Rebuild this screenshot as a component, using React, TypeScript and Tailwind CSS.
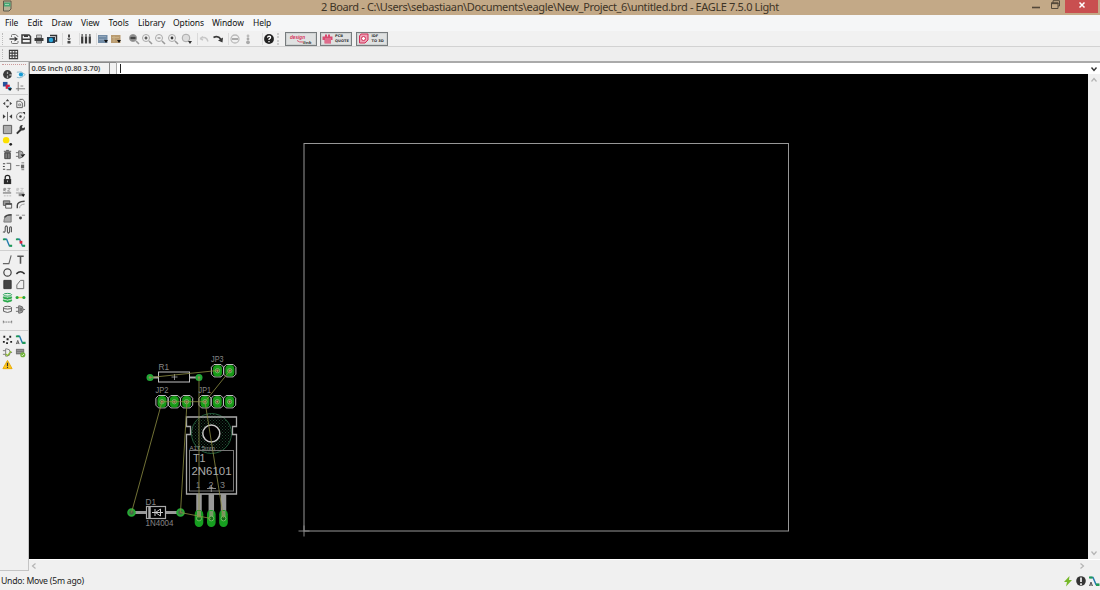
import type { ReactNode } from 'react';

const ui = 'font-["Noto_Sans","Open_Sans",sans-serif]';

const menus = [
  { label: 'File', width: 'w-[22.5px]' },
  { label: 'Edit', width: 'w-[24px]' },
  { label: 'Draw', width: 'w-[29.5px]' },
  { label: 'View', width: 'w-[27.5px]' },
  { label: 'Tools', width: 'w-[29.5px]' },
  { label: 'Library', width: 'w-[35px]' },
  { label: 'Options', width: 'w-[39px]' },
  { label: 'Window', width: 'w-[41px]' },
  { label: 'Help', width: 'w-[30px]' },
];

const K = '#3a3a3a';
const G = '#1f9a55';

// every glyph is drawn on a 12 x 12 grid
const icons: Record<string, ReactNode> = {
  open: <><path d="M3.500 4V2.500q0-1 1-1h3l2.500 2V4M3.500 8v1.500q0 1 1 1H9q1 0 1-1V8" stroke="#777" /><path d="M1.500 6h5" stroke={K} strokeWidth="1.300" /><path d="M6.500 3.500L10 6 6.500 8.500z" fill={K} stroke="none" /></>,
  save: <><path d="M2 2h7l1.500 1.500V10H2z" stroke={K} strokeWidth="1.500" /><path d="M2 5.500h8.500V7H2zM4 2h4v2H4z" fill={K} stroke="none" /></>,
  print: <><path d="M3.500 2h5v3h-5zM3.500 8h5v2h-5z" fill="#ccc" stroke="#777" /><path d="M1.500 5h9v3h-9z" fill={K} stroke="none" /></>,
  cam: <><path d="M4 2.500h6.500v5.500H9" stroke="#333" strokeWidth="1.400" /><path d="M1 4h8v6H1z" fill="#26384a" stroke="none" /><circle cx="5" cy="7" r="2.200" fill="#2aa7dc" stroke="none" /></>,
  board: <path d="M5 1.500h2v3H5zM4 5.500h4L6 7.500zM4.500 8h3v2.500h-3z" fill="#444" stroke="none" />,
  library: <><path d="M2.200 3.500v7M6 3.500v7M9.800 3.500v7" stroke={K} strokeWidth="2.200" /><path d="M2.200 1v3M6 1v3M9.800 1v3" stroke="#777" strokeWidth="1.700" /></>,
  script: <><path d="M1 2h9.500v8H1z" fill="#718ba5" stroke="none" /><path d="M2 3.500h7M2 6.500h5" stroke="#8fa5ba" /><path d="M7 7h4l-2 3z" fill="#111" stroke="none" /></>,
  ulp: <><path d="M1 2h9.500v8H1z" fill="#b99b70" stroke="none" /><path d="M2 4.500h7M4 3v6" stroke="#c9b186" /><path d="M7 7h4l-2 3z" fill="#111" stroke="none" /></>,
  zoomFit: <><circle cx="5" cy="5" r="3.500" fill="#888" stroke="#999" /><path d="M2.500 5h5" stroke="#444" strokeWidth="2" /><path d="M8 8l3 3" stroke="#999" strokeWidth="1.600" /></>,
  zoomIn: <><circle cx="5" cy="5" r="3.500" stroke="#aaa" /><path d="M3.500 5h3M5 3.500v3" stroke={K} strokeWidth="1.200" /><path d="M8 8l3 3" stroke="#999" strokeWidth="1.600" /></>,
  zoomOut: <><circle cx="5" cy="5" r="3.500" stroke="#aaa" /><path d="M3.500 5h3" stroke="#777" /><path d="M8 8l3 3" stroke="#999" strokeWidth="1.600" /></>,
  zoomRedraw: <><circle cx="5" cy="5" r="3.500" stroke="#aaa" /><circle cx="5" cy="5" r="1.400" fill={K} stroke="none" /><path d="M8 8l3 3" stroke="#999" strokeWidth="1.600" /></>,
  zoomSelect: <><circle cx="5" cy="5" r="3.800" fill="#ddd" stroke="#aaa" /><path d="M7 8h4l-2 3z" fill="#333" stroke="none" /></>,
  undo: <path d="M2.500 5.500q6-3 7.500 3M2 5.500l3-2M2 5.500l3 1.500" stroke="#c8c8c8" strokeWidth="1.400" />,
  redo: <><path d="M1.500 4.500q4.500-2.500 7.500 2" stroke={K} strokeWidth="1.800" /><path d="M11 4.500l-.5 5-4.500-2z" fill={K} stroke="none" /></>,
  stop: <><circle cx="6" cy="6" r="4" stroke="#bbb" strokeWidth="1.300" /><path d="M3 6h6" stroke="#aaa" strokeWidth="2" /></>,
  go: <><circle cx="6" cy="3" r="1.400" fill="#bbb" stroke="none" /><circle cx="6" cy="6" r="1.400" fill="#aaa" stroke="none" /><circle cx="6" cy="9.300" r="1.900" fill="#aaa" stroke="none" /></>,
  help: <><circle cx="6" cy="6" r="4.900" fill="#222" stroke="none" /><path d="M4.500 4.700q.2-1.500 1.600-1.500 2 .2 1.300 1.800L6 6.300v.7M6 8v1.200" stroke="#fff" strokeWidth="1.300" /></>,
  grid: <path d="M1.500 1.500h9v9h-9zM4.500 1.500v9M7.500 1.500v9M1.500 4.500h9M1.500 7.500h9" stroke={K} strokeWidth="1.100" />,
  info: <><circle cx="6" cy="6" r="4.800" fill="#3a3a3a" stroke="none" /><path d="M6 3v2.500M6 7v3" stroke="#aaa" strokeWidth="1.400" /><path d="M8 6.500h3" stroke="#eee" /></>,
  show: <><path d="M2 3.500q5-2 9 2.500-4 5-9 3" fill="#e8f6fb" stroke="#8bb3c4" /><circle cx="6.500" cy="6" r="2.300" fill="#169bd5" stroke="none" /></>,
  display: <><path d="M1 1h5v5H1z" fill="#27539c" stroke="none" /><path d="M4 4h4.500v4.500H4z" fill="#d22345" stroke="none" /><path d="M6.500 6.500H10V10H6.500z" fill="#45a5d8" stroke="none" /><path d="M6.500 8h4.500l-2.200 3z" fill="#111" stroke="none" /></>,
  mark: <path d="M3.500 1v10M1 8.500h10M6 5.500h3" stroke="#777" />,
  move: <path d="M6 1l2 2.500H4zM6 11l2-2.500H4zM1 6l2.500-2v4zM11 6L8.500 4v4z" fill="#444" stroke="none" />,
  copy: <><path d="M5 1.500h3.500l2 2V9h-1M2 3.500h4l2 2V10.500H2z" stroke="#555" /><path d="M4 6.500h2v2H4z" stroke="#888" /></>,
  mirror: <><path d="M6 1v10" stroke="#666" /><path d="M1 3.500L4 6 1 8.500zM11 3.500L8 6l3 2.500z" fill={K} stroke="none" /></>,
  rotate: <><path d="M8 2.300A4.300 4.300 0 1 0 10.300 6" stroke="#666" /><circle cx="6" cy="6" r="1.300" fill={K} stroke="none" /><path d="M8 1h3v3z" fill={K} stroke="none" /></>,
  group: <path d="M1.500 1.500h9v9h-9z" fill="#adadad" stroke="#555" />,
  change: <><path d="M2 10.500L7 5.500" stroke="#333" strokeWidth="2.200" /><path d="M10.800 3.500L8.500 4.500 7.500 3.500 8.500 1.200A3 3 0 1 0 10.800 3.500" fill={K} stroke="none" /></>,
  paste: <><circle cx="4.500" cy="4.500" r="3.500" fill="#fce000" stroke="none" /><circle cx="9.500" cy="9" r="1.500" fill="#222" stroke="none" /></>,
  trash: <><path d="M3 4h6v6.500H3z" fill="#555" stroke="#444" /><path d="M2 2.500h8M4.500 1.500h3" stroke="#444" /><path d="M4.500 5v5M7.500 5v5" stroke="#999" /></>,
  add: <><path d="M1 4h3M1 8h3M4 2h1q4 0 4 4t-4 4H4zM9 6h2" fill="#aaa" stroke="#666" /><path d="M6 6h5L8.500 9z" fill="#222" stroke="none" /></>,
  pinswap: <><path d="M5 2.500h4.500v7H5" stroke="#555" /><path d="M1 3h2.500M1 9h2.500M1 6h2" stroke="#444" strokeWidth="1.300" /></>,
  replace: <><path d="M1 5h4M7 2h3M7 9.500h3" stroke="#777" /><path d="M6.500 4H10v4H6.500z" fill="#666" stroke="none" /></>,
  lock: <><path d="M3.500 6V3.800q0-2.300 2.500-2.300t2.500 2.300V6" stroke="#222" strokeWidth="1.400" /><path d="M2 5.500h8V11H2z" fill="#2a2a2a" stroke="none" /><path d="M6 7v2" stroke="#bbb" /></>,
  name: <><path d="M2 4.500V1.500h2V3H2l2 1.500M6 1.500h3L6 4.500h3" stroke="#777" strokeWidth=".8" /><path d="M1 6.500h9" stroke="#555" /><path d="M2 9.500h8" stroke="#ccc" strokeDasharray="2 1" strokeWidth="1.500" /></>,
  value: <><path d="M2 4.500V1.500h2V3H2l2 1.500M6 1.500h3L6 4.500h3" stroke="#bbb" strokeWidth=".8" /><path d="M1 6.500h9" stroke="#999" /><path d="M4 7h6v3H4z" fill="#888" stroke="none" /><path d="M7 8h4l-2 3z" fill="#111" stroke="none" /></>,
  smash: <><path d="M1.500 2h7v5h-7z" fill="#999" stroke="#555" /><path d="M4 5h6.500v5H4z" fill="#eee" stroke="#555" /><path d="M4 5.500h6.500" stroke="#444" strokeWidth="1.700" /></>,
  miter: <><path d="M2.500 10V7q0-4 8-4.500" stroke="#444" strokeWidth="1.500" /><path d="M5 10q0-4 5.500-4.500" stroke="#999" /></>,
  split: <><path d="M2 11q0-8 8-8v8z" fill="#aaa" stroke="#777" /><path d="M2.500 6q2-3 8-3" stroke="#444" strokeWidth="1.400" /></>,
  optimize: <><path d="M1 3.500h3.500M7.500 3.500H11" stroke="#888" /><circle cx="6" cy="6.500" r="1.600" fill="#444" stroke="none" /></>,
  meander: <path d="M1 8.500q2.500 1.500 2.500-2V3.500q1.200-3 2.400 0V8.500q1.200 3 2.400 0V4q1.200-2 2 0v5" stroke="#555" strokeWidth="1.200" />,
  route: <><path d="M2 2.500h3l3 7h3" stroke="#247bad" strokeWidth="1.500" /><path d="M1 1.500h3v2H1zM8 8.500h3v2H8z" fill={G} stroke="none" /></>,
  ripup: <><path d="M2 2.500h3l3 7h3" stroke="#247bad" strokeWidth="1.500" /><path d="M1 1.500h3v2H1zM8 8.500h3v2H8z" fill={G} stroke="none" /><path d="M5 4.200h3v3H5z" fill="#df2038" stroke="none" /></>,
  wire: <path d="M1 10.500h6.500L10 1.500" stroke="#666" strokeWidth="1.200" />,
  text: <path d="M2.500 2.500h7M6 2.500V10.500" stroke="#555" strokeWidth="1.700" />,
  circle: <circle cx="6" cy="6" r="4" stroke="#444" strokeWidth="1.300" />,
  arc: <path d="M1.500 7.500Q6 3 10.500 7.500" stroke="#333" strokeWidth="1.600" />,
  rect: <path d="M2 1.500h8v9H2z" fill="#444" stroke="#333" />,
  polygon: <path d="M2 10.500V6.500L6 1.500h3.500v9z" stroke="#666" />,
  via: <><ellipse cx="6" cy="3" rx="4.500" ry="1.500" fill="#e0f5df" stroke={G} /><path d="M1.500 5.200q4.500 2.500 9 0v1.500q-4.500 2.500-9 0zM1.500 8.500q4.500 2.500 9 0v1.300q-4.500 2.500-9 0z" fill="#26a847" stroke="#26a847" strokeWidth=".8" /></>,
  signal: <><path d="M3 6h6" stroke="#e9cf3a" strokeWidth="1.500" /><circle cx="2.300" cy="6" r="1.700" fill="#25a53c" stroke="none" /><circle cx="9.700" cy="6" r="1.700" fill="#25a53c" stroke="none" /></>,
  hole: <><ellipse cx="6" cy="4" rx="4.300" ry="1.500" stroke="#555" /><path d="M1.700 4v4q4.300 2.500 8.600 0V4" stroke="#555" /></>,
  attribute: <><path d="M1 4h3M1 8h3M4 2h1q4 0 4 4t-4 4H4zM9 6h2" fill="#aaa" stroke="#666" /><path d="M5 4h3v4H5z" fill="#777" stroke="none" /></>,
  dimension: <path d="M1.500 4v3M1 5.500h10M10.500 4v3" stroke="#777" strokeDasharray="2 .7" />,
  ratsnest: <path d="M1.500 2h2v2h-2zM8 2h2v2H8zM5 4.700h2.200v2.200H5zM1 7.500h2v2H1zM4.500 9h2v2h-2zM9 7.500h2v2H9z" fill="#222" stroke="none" />,
  auto: <><path d="M2 2.500h3l3 7h3" stroke="#247bad" strokeWidth="1.500" /><path d="M1 1.500h3.500v2H1zM8 8.500h3.500V11H8z" fill={G} stroke="none" /><path d="M1.500 11L3 7l1.500 4M2 10h2" stroke="#555" /></>,
  erc: <><path d="M1 4h3M1 8h3M4 2h1q4 0 4 4t-4 4H4zM9 6h2" stroke="#777" /><path d="M4 7.500l2 2 4-5" stroke="#8cbd2d" strokeWidth="1.300" /></>,
  drc: <><path d="M1 2h9v6H1z" fill="#777" stroke="none" /><path d="M2 4h7M2 6h7" stroke="#999" /><circle cx="8.500" cy="8.500" r="2.800" fill="#72b43c" stroke="none" /><path d="M7 8.500l1 1L10 7.500" stroke="#fff" strokeWidth=".8" /></>,
  warning: <><path d="M6 1.500L11 10.500H1z" fill="#ffc61b" stroke="#e8aa00" /><path d="M6 4v3.500M6 8.500v1.300" stroke="#333" strokeWidth="1.300" /></>,
  bolt: <path d="M7.500 1L2 7h3l-1 4.500 6-6.500H7z" fill="#76b82a" stroke="none" />,
  alert: <><circle cx="6" cy="6" r="4.800" fill="#333" stroke="none" /><path d="M6 2.500V7M6 8.300v1.700" stroke="#fff" strokeWidth="1.600" /></>,
};

function Icon({ name, size = 'size-3' }: { name: string; size?: string }) {
  return (
    <svg viewBox="0 0 12 12" fill="none" className={`${size} shrink-0`}>
      {icons[name]}
    </svg>
  );
}

const actions = [
  { name: 'open', gap: 'ml-[8px]' },
  { name: 'save', gap: 'ml-0' },
  { name: 'print', gap: 'ml-[1px]' },
  { name: 'cam', gap: 'ml-[1px]' },
  { name: 'board', gap: 'ml-[5px]', sep: true },
  { name: 'library', gap: 'ml-[5px]', sep: true },
  { name: 'script', gap: 'ml-[5px]', sep: true },
  { name: 'ulp', gap: 'ml-[1px]' },
  { name: 'zoomFit', gap: 'ml-[5.5px]' },
  { name: 'zoomIn', gap: 'ml-[1px]' },
  { name: 'zoomOut', gap: 'ml-[1.5px]' },
  { name: 'zoomRedraw', gap: 'ml-[1px]' },
  { name: 'zoomSelect', gap: 'ml-[1.5px]' },
  { name: 'undo', gap: 'ml-[5px]', sep: true },
  { name: 'redo', gap: 'ml-[2px]' },
  { name: 'stop', gap: 'ml-[5px]', sep: true },
  { name: 'go', gap: 'ml-[1px]' },
  { name: 'help', gap: 'ml-[9px]', sep: true },
];

const toolGroups = [
  ['info', 'show', 'display', 'mark'],
  [
    'move', 'copy', 'mirror', 'rotate', 'group', 'change', 'paste', '', 'trash', 'add', 'pinswap', 'replace',
    'lock', '', 'name', 'value', 'smash', 'miter', 'split', 'optimize', 'meander', '', 'route', 'ripup',
  ],
  ['wire', 'text', 'circle', 'arc', 'rect', 'polygon', 'via', 'signal', 'hole', 'attribute', 'dimension', ''],
  ['ratsnest', 'auto', 'erc', 'drc', 'warning', ''],
];

function TitleBar() {
  return (
    <div className="flex h-[15px] shrink-0 items-start bg-[#c3a987]">
      <svg viewBox="0 0 10 12" className="ml-[2px] h-3 w-[10px]" fill="none">
        <path d="M1.500 1h7.500v8l-2 2H1.500z" fill="#b5b094" stroke="#5d5b4b" />
        <path d="M2 2.500h6.500v4H2z" fill="#47a775" />
        <path d="M3 4.500h4" stroke="#9ed4b0" />
      </svg>
      <div className="flex-1 whitespace-nowrap pl-[309px] text-[11px] leading-[14px] tracking-[-0.36px] text-[#3e3426]">
        2 Board - C:\Users\sebastiaan\Documents\eagle\New_Project_6\untitled.brd - EAGLE 7.5.0 Light
      </div>
      <svg viewBox="0 0 30 12" className="mr-[4px] h-3 w-[30px]" fill="none">
        <path d="M1 7.500h8" stroke="#54493a" strokeWidth="1.600" />
        <path d="M22 3V.7h6.500V6H27" stroke="#54493a" />
        <path d="M20.500 3h6.500v5.500h-6.500z" stroke="#54493a" />
        <path d="M20 3.300h7.500" stroke="#54493a" strokeWidth="1.700" />
      </svg>
      <div className="mr-[2px] flex h-[12.5px] w-[33px] justify-center bg-[#c94f50]">
        <svg viewBox="0 0 8 8" className="mt-[1px] size-2">
          <path d="M1.500 1.500l5 5M6.500 1.500l-5 5" stroke="#fff" strokeWidth="1.500" />
        </svg>
      </div>
    </div>
  );
}

function ServiceButtons() {
  const frame = 'flex h-[14px] w-8 items-center border border-[#777c7e] bg-[#dfe1e1] shadow-[inset_0_0_0_1px_#cfd2d2]';
  const tiny = 'font-["DejaVu_Sans",sans-serif] font-bold text-[3.6px] leading-[4.8px] text-[#333]';
  return (
    <div className="ml-[10px] flex gap-[3.500px]">
      <div className={frame}>
        <svg viewBox="0 0 30 12" className="h-3 w-[30px]">
          <text x="4" y="5.800" fontFamily="Liberation Sans" fontStyle="italic" fontWeight="bold" fontSize="5.800" fill="#d73359" textLength="15" lengthAdjust="spacingAndGlyphs">design</text>
          <text x="17" y="10.500" fontFamily="Liberation Sans" fontStyle="italic" fontWeight="bold" fontSize="4.200" fill="#333" textLength="8.500" lengthAdjust="spacingAndGlyphs">link</text>
          <path d="M11 7.500q2 2 6 1.500" stroke="#d73359" strokeWidth=".8" fill="none" />
        </svg>
      </div>
      <div className={frame}>
        <svg viewBox="0 0 11 11" className="ml-[1px] mr-[2px] size-[11px]">
          <path d="M3 1.500h2v2h1v-2h2v2h2.500V7H9v3.500H2.500V7H.5V3.500H3z" fill="#d74b70" />
          <path d="M4 5v5M6 5v5M8 5v5" stroke="#edadc0" strokeWidth=".7" />
        </svg>
        <div className={tiny}>PCB<br />QUOTE</div>
      </div>
      <div className={frame}>
        <svg viewBox="0 0 11 11" className="ml-[1px] mr-[3px] size-[11px]" fill="none">
          <path d="M3 1h7v6l-3 3H1.500V3z" fill="#eda0b5" stroke="#d32f58" />
          <circle cx="5.500" cy="5.500" r="2" fill="#fff" stroke="#d32f58" />
        </svg>
        <div className={tiny}>IDF<br />TO 3D</div>
      </div>
    </div>
  );
}

function ActionBar() {
  return (
    <div className="flex h-4 shrink-0 items-center border-b border-[#d2d2d2] bg-[#f1f1f1]">
      <div className="ml-[2px] h-3 w-0 border-l border-dotted border-[#bbb]" />
      <div className="-ml-[3px] flex items-center">
        {actions.map((a) => (
          <div key={a.name} className={`flex items-center ${a.gap}`}>
            {a.sep && <div className="-ml-px h-3 w-px bg-[#dadada]" />}
            <Icon name={a.name} />
          </div>
        ))}
      </div>
      <div className="ml-[2px] h-3 w-0 border-l-2 border-dotted border-[#ccc]" />
      <div className="-ml-[4px]">
        <ServiceButtons />
      </div>
    </div>
  );
}

function ToolPalette() {
  return (
    <div className="h-[509px] w-[29px] shrink-0 border-b border-r border-[#c4c4c4] bg-[#f0f0f0] pt-[2px]">
      <div className="mx-[2px] h-[4px] border-t border-dotted border-[#c99]" />
      {toolGroups.map((tools, i) => (
        <div key={i} className={i > 0 ? 'mt-[1px] border-t border-[#cfcfcf] pt-[2.500px]' : ''}>
          <div className="ml-[1px] grid auto-rows-[12.600px] grid-cols-[13px_13px] items-center justify-items-center">
            {tools.map((t, j) => (t ? <Icon key={j} name={t} size="size-[11px]" /> : <span key={j} />))}
          </div>
        </div>
      ))}
    </div>
  );
}

function CommandLine() {
  return (
    <div className="flex h-3 shrink-0 items-stretch">
      <div className="w-[80px] whitespace-nowrap border-l border-t border-[#8b8b8b] bg-[#f2f2f2] pl-[1.500px] text-[7.500px] font-semibold leading-[11px] tracking-[-0.11px] text-[#444]">
        0.05 inch (0.80 3.70)
      </div>
      <div className="w-[7px] border-l border-t border-[#8b8b8b] bg-[#f2f2f2]" />
      <div className="flex flex-1 items-center justify-between border-l border-t border-[#aaa] bg-white">
        <div className="ml-[3px] h-[9px] w-px bg-[#222]" />
        <svg viewBox="0 0 8 8" className="mr-[2px] size-2" fill="none">
          <path d="M1.500 2.500L4 5.500l2.500-3" stroke="#333" strokeWidth="1.400" />
        </svg>
      </div>
    </div>
  );
}

function Header({ x, y, pins }: { x: number; y: number; pins: number }) {
  return (
    <g>
      {Array.from({ length: pins }, (_, i) => {
        const cx = x + i * 12.3;
        return (
          <g key={i}>
            <path d={`M${cx - 3.500} ${y - 6.200}h7l2.600 2.700v7l-2.600 2.700h-7l-2.600-2.700v-7z`} fill="none" stroke="#bbb" />
            <rect x={cx - 4.500} y={y - 5.800} width="9" height="11.600" rx="4" fill="#169a16" />
            <circle cx={cx} cy={y} r="2.200" fill="#49662d" stroke="#79c870" strokeWidth=".8" />
            <path d={`M${cx - 1} ${y}h2M${cx} ${y - 1}v2`} stroke="#d7a37c" strokeWidth=".8" />
          </g>
        );
      })}
    </g>
  );
}

function Label({ x, y, size, width, text, color = '#858585' }: { x: number; y: number; size: number; width: number; text: string; color?: string }) {
  return (
    <text x={x} y={y} fontSize={size} textLength={width} lengthAdjust="spacingAndGlyphs" fill={color}>
      {text}
    </text>
  );
}

// board coordinates are window pixels, hence the offset view box
function Board() {
  return (
    <svg viewBox="29 74 1059 485" className="h-[485px] w-[1059px] shrink-0 bg-black" fill="none" fontFamily="Liberation Sans, sans-serif">
      <defs>
        <pattern id="keepout" width="3" height="3" patternUnits="userSpaceOnUse">
          <path d="M0 .5h1M1.500 2h1" stroke="#27583b" strokeWidth=".8" />
        </pattern>
      </defs>

      <rect x="304" y="143.500" width="484.500" height="387.500" stroke="#979797" />
      <path d="M298.500 531h11M304 525.500v11" stroke="#858585" />

      {/* T1 */}
      <circle cx="211.500" cy="433.500" r="20" fill="url(#keepout)" stroke="#245c3b" />
      <path d="M186.500 417h50v9.500h-4v8h4v59.500h-50v-59.500h4v-8h-4z" stroke="#aaa" strokeWidth="1.300" />
      <rect x="189.500" y="450.500" width="44" height="40.500" stroke="#777" />
      <circle cx="211.300" cy="433.500" r="8.500" fill="#000" stroke="#c8c8c8" strokeWidth="1.500" />
      {[199, 211.300, 223.500].map((x) => (
        <g key={x}>
          <path d={`M${x} 494v19`} stroke="#999" strokeWidth="5.500" />
          <rect x={x - 4.300} y="510" width="8.600" height="17" rx="4.200" fill="#169f20" />
          <path d={`M${x} 511v6`} stroke="#789a67" strokeWidth="4" />
          <circle cx={x} cy="518.500" r="2.400" fill="#176b1b" stroke="#83ca70" strokeWidth=".8" />
        </g>
      ))}

      {/* R1 */}
      <path d="M150 377.500h9M189 377.500h9" stroke="#aaa" strokeWidth="2.200" />
      <rect x="158.500" y="372" width="31" height="10" fill="#000" stroke="#c0c0c0" />
      <path d="M171.500 377h6M174.500 374v6" stroke="#aaa" strokeWidth=".8" />
      <circle cx="150" cy="377.500" r="3.500" fill="#22a837" />
      <circle cx="199" cy="377.500" r="3.500" fill="#22a837" />
      <circle cx="150" cy="377.500" r="1.200" fill="#8a8a55" />
      <circle cx="199" cy="377.500" r="1.200" fill="#8a8a55" />

      {/* D1 */}
      <path d="M131 512.500h15M166 512.500h15" stroke="#999" strokeWidth="3" />
      <rect x="146.500" y="506.500" width="19" height="12" fill="#000" stroke="#aaa" strokeWidth="1.200" />
      <path d="M149.500 507v11" stroke="#aaa" strokeWidth="2.500" />
      <path d="M152 512.500h11M155 509v7M160.500 509v7l-5-3.500z" stroke="#ccc" />
      <circle cx="131.500" cy="512.500" r="3.300" fill="#466646" stroke="#26a935" strokeWidth="2" />
      <circle cx="180.500" cy="512.500" r="3.300" fill="#466646" stroke="#26a935" strokeWidth="2" />

      <Header x={217.500} y={370.700} pins={2} />
      <Header x={162} y={401.700} pins={3} />
      <Header x={205} y={401.700} pins={3} />

      {/* airwires */}
      <path
        d="M150 377.500L217.500 370.500M230 370.500L205 401.700L223.500 518M199 377.500V518M162 401.700L131.500 512.500M187 401.700L180.500 512.500L211 518.500M162 401.700H205"
        stroke="#8d8d42"
        strokeWidth=".8"
      />

      <Label x={158.500} y={370} size={9} width={10.500} text="R1" />
      <Label x={211} y={361.500} size={9} width={12.500} text="JP3" />
      <Label x={155.500} y={393} size={9} width={13} text="JP2" />
      <Label x={198.500} y={393} size={9} width={12.500} text="JP1" />
      <Label x={189.500} y={449.500} size={6} width={25.500} text="A17,5mm" color="#9a9a9a" />
      <Label x={193} y={462} size={11.500} width={12.500} text="T1" color="#aaa" />
      <Label x={191.500} y={475} size={11.500} width={40} text="2N6101" color="#aaa" />
      <Label x={196} y={487.800} size={8.500} width={4} text="1" />
      <Label x={208.500} y={487.800} size={8.500} width={5} text="2" />
      <Label x={220} y={487.800} size={8.500} width={5} text="3" />
      <path d="M207 488.500h9M211.300 485v7" stroke="#aaa" strokeWidth=".8" />
      <Label x={145.500} y={505} size={9} width={10.500} text="D1" />
      <Label x={145.500} y={525.500} size={9} width={28} text="1N4004" />
    </svg>
  );
}

function Chevron({ d }: { d: string }) {
  return (
    <svg viewBox="0 0 8 8" className="size-2" fill="none">
      <path d={d} stroke="#b4b4b4" strokeWidth="1.200" />
    </svg>
  );
}

function Workspace() {
  return (
    <div className="flex w-[1071px] flex-col">
      <CommandLine />
      <div className="flex h-[485px]">
        <Board />
        <div className="flex flex-1 flex-col items-center justify-between bg-[#f0f0f0] py-[2px]">
          <Chevron d="M1.500 5.500L4 2.500l2.500 3" />
          <Chevron d="M1.500 2.500L4 5.500l2.500-3" />
        </div>
      </div>
      <div className="flex h-3 items-center justify-between border-t border-white bg-[#f0f0f0] pl-[1px] pr-[14px]">
        <Chevron d="M5.500 1.500L2.500 4l3 2.500" />
        <Chevron d="M2.500 1.500L5.500 4l-3 2.500" />
      </div>
    </div>
  );
}

export default function App() {
  return (
    <div className={`flex h-[590px] w-[1100px] flex-col overflow-hidden bg-[#f0f0f0] ${ui}`}>
      <TitleBar />
      <div className="flex h-4 shrink-0 bg-[#f5f6f7] pl-[5px] text-[8.500px] leading-4 tracking-[-0.08px] text-[#111]">
        {menus.map((m) => (
          <span key={m.label} className={`${m.width} whitespace-nowrap`}>{m.label}</span>
        ))}
      </div>
      <ActionBar />
      <div className="flex h-[15px] shrink-0 items-center border-b border-[#aaa] bg-[#eee]">
        <div className="ml-[2px] h-[10px] w-0 border-l border-dotted border-[#bbb]" />
        <div className="ml-[5px]">
          <Icon name="grid" size="size-[11px]" />
        </div>
      </div>
      <div className="flex shrink-0">
        <ToolPalette />
        <Workspace />
      </div>
      <div className="flex flex-1 items-center justify-between pl-[1px] pt-px">
        <span className="text-[8.700px] leading-[14px] tracking-[-0.24px] text-[#222]">Undo: Move (5m ago)</span>
        <div className="flex gap-[1px]">
          <Icon name="bolt" />
          <Icon name="alert" />
          <Icon name="auto" />
        </div>
      </div>
    </div>
  );
}
